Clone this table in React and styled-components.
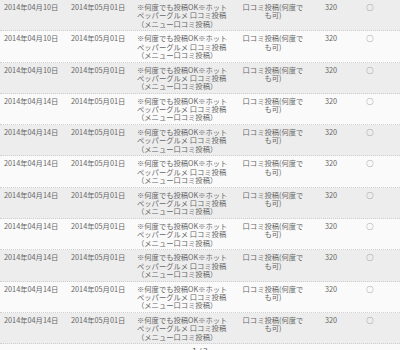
import React from 'react'
import styled, { createGlobalStyle } from 'styled-components'

const GlobalStyle = createGlobalStyle`
  html, body {
    margin: 0;
    padding: 0;
    background: #fafafa;
    overflow: hidden;
  }
  body {
    font-family: 'Noto Sans CJK JP', 'Noto Sans', sans-serif;
    color: #666;
  }
`

const Table = styled.div`
  width: 400px;
  display: flex;
  flex-direction: column;
`

const Row = styled.div`
  display: grid;
  grid-template-columns: 67px 66px 103px 74px 42px 36px 12px;
  height: 31.3px;
  box-sizing: border-box;
  background: ${p => (p.$odd ? '#ededed' : '#fafafa')};
  border-bottom: 1px dotted #cfcfcf;
`

const Cell = styled.div`
  padding: 3px 0 0 ${p => (p.$center ? 0 : 4)}px;
  font-size: 7.3px;
  line-height: 8.3px;
  text-align: ${p => (p.$center ? 'center' : 'left')};
  white-space: nowrap;
`

const Pager = styled.div`
  text-align: center;
  font-size: 8px;
  line-height: 10px;
  padding: 2px 0 0 0;
  color: #555;
`

const rows = [
  '2014年04月10日',
  '2014年04月10日',
  '2014年04月10日',
  '2014年04月14日',
  '2014年04月14日',
  '2014年04月14日',
  '2014年04月14日',
  '2014年04月14日',
  '2014年04月14日',
  '2014年04月14日',
  '2014年04月14日'
]

export default function App () {
  return (
    <>
      <GlobalStyle />
      <Table>
        {rows.map((date, i) => (
          <Row key={i} $odd={i % 2 === 0}>
            <Cell>{date}</Cell>
            <Cell>2014年05月01日</Cell>
            <Cell>
              ※何度でも投稿OK※ホット<br />
              ペッパーグルメ 口コミ投稿<br />
              （メニュー口コミ投稿）
            </Cell>
            <Cell $center>
              口コミ投稿(何度で<br />
              も可)
            </Cell>
            <Cell $center>320</Cell>
            <Cell $center>○</Cell>
            <Cell />
          </Row>
        ))}
        <Pager>1 / 2</Pager>
      </Table>
    </>
  )
}
